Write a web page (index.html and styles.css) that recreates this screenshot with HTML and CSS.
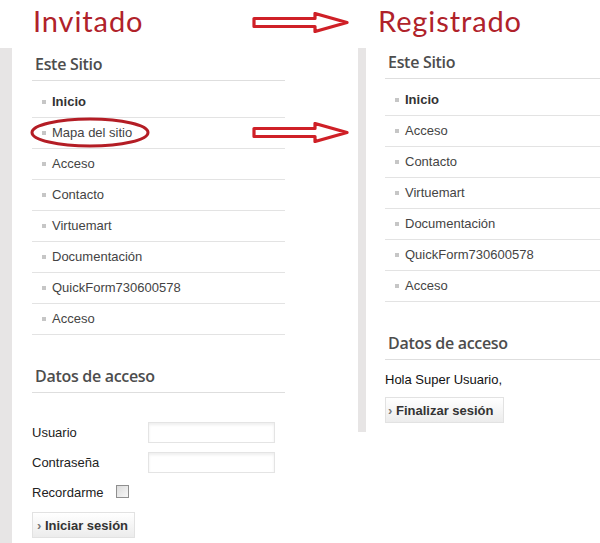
FILE: index.html
```html
<!DOCTYPE html>
<html lang="es">
<head>
    <meta charset="UTF-8">
    <title>Invitado / Registrado</title>
    <link rel="stylesheet" href="styles.css">
</head>
<body>
    <div class="page">
        <section class="col guest">
            <h1 class="title">Invitado</h1>
            <div class="panel">
                <div class="module">
                    <h3>Este Sitio</h3>
                    <ul class="menu">
                        <li class="current">Inicio</li>
                        <li>Mapa del sitio</li>
                        <li>Acceso</li>
                        <li>Contacto</li>
                        <li>Virtuemart</li>
                        <li>Documentación</li>
                        <li>QuickForm730600578</li>
                        <li>Acceso</li>
                    </ul>
                </div>
                <div class="module">
                    <h3>Datos de acceso</h3>
                    <form class="login">
                        <div class="row">
                            <label>Usuario</label>
                            <input type="text">
                        </div>
                        <div class="row">
                            <label>Contraseña</label>
                            <input type="password">
                        </div>
                        <div class="row check">
                            <label>Recordarme</label>
                            <input type="checkbox">
                        </div>
                        <button type="button" class="btn"><span>›</span> Iniciar sesión</button>
                    </form>
                </div>
            </div>
        </section>

        <section class="col user">
            <h1 class="title">Registrado</h1>
            <div class="panel">
                <div class="module">
                    <h3>Este Sitio</h3>
                    <ul class="menu">
                        <li class="current">Inicio</li>
                        <li>Acceso</li>
                        <li>Contacto</li>
                        <li>Virtuemart</li>
                        <li>Documentación</li>
                        <li>QuickForm730600578</li>
                        <li>Acceso</li>
                    </ul>
                </div>
                <div class="module">
                    <h3>Datos de acceso</h3>
                    <p class="hello">Hola Super Usuario,</p>
                    <button type="button" class="btn"><span>›</span> Finalizar sesión</button>
                </div>
            </div>
        </section>

        <!-- red annotations drawn over the screenshot -->
        <svg class="arrow arrow-top" viewBox="0 0 98 21">
            <path d="M2,6.5 H63 V1.5 L95,10.5 L63,19.5 V14.5 H2 Z"/>
        </svg>
        <svg class="arrow arrow-mid" viewBox="0 0 98 21">
            <path d="M2,6.5 H63 V1.5 L95,10.5 L63,19.5 V14.5 H2 Z"/>
        </svg>
        <svg class="circle" viewBox="0 0 120 31">
            <ellipse cx="60" cy="15.5" rx="58" ry="13.5"/>
        </svg>
    </div>
</body>
</html>
```

FILE: styles.css
```css
* {
    margin: 0;
    padding: 0;
    box-sizing: border-box;
}

body {
    width: 600px;
    height: 543px;
    overflow: hidden;
    background-color: #ffffff;
    font-family: "Liberation Sans", Arial, sans-serif;
    font-size: 13px;
    color: #333333;
}

.page {
    position: relative;
    display: flex;
    height: 100%;
}

.col {
    display: flex;
    flex-direction: column;
}

.guest {
    width: 358px;
}

.user {
    flex: 1;
}

.title {
    height: 48px;
    padding-top: 3px;
    font-family: Lato, "Open Sans", sans-serif;
    font-size: 29px;
    font-weight: 400;
    line-height: 36px;
    letter-spacing: 0.9px;
    color: #b0222a;
}

.guest .title {
    padding-left: 33px;
}

.user .title {
    padding-left: 20px;
}

.panel {
    flex: 1;
    border-left: 12px solid #e7e5e5;
    padding-left: 20px;
}

.guest .panel {
    width: 285px;
}

.user .panel {
    flex: 0 0 auto;
    height: 384px;
    border-left-width: 8px;
    padding-left: 19px;
}

.module h3 {
    padding: 5px 3px;
    font-family: "Open Sans", sans-serif;
    font-size: 16px;
    font-weight: 600;
    line-height: 22px;
    letter-spacing: -0.3px;
    color: #4d4d4d;
    border-bottom: 1px solid #dedede;
}

.user .module:first-child h3 {
    padding-top: 3px;
}

.module + .module {
    margin-top: 25px;
}

.menu {
    list-style: none;
    padding-top: 6px;
}

.menu li {
    display: flex;
    align-items: center;
    gap: 6px;
    height: 31px;
    padding-left: 10px;
    padding-bottom: 1px;
    border-bottom: 1px solid #e3e3e3;
    color: #444444;
}

.menu li::before {
    content: "";
    width: 4px;
    height: 4px;
    background-color: #c6c6c6;
}

.menu li.current {
    font-weight: bold;
    color: #333333;
}

.login {
    display: flex;
    flex-direction: column;
    align-items: flex-start;
    gap: 9px;
    padding-top: 29px;
}

.row {
    display: flex;
    align-items: center;
    height: 21px;
}

.row label {
    width: 116px;
    color: #222222;
}

.row input[type="text"],
.row input[type="password"] {
    width: 127px;
    height: 21px;
    border: 1px solid #e4e4e4;
    box-shadow: inset 0 2px 3px #efefef;
    outline: none;
}

.row.check {
    gap: 12px;
}

.row.check label {
    width: auto;
}

.row input[type="checkbox"] {
    appearance: none;
    width: 13px;
    height: 13px;
    margin-top: -3px;
    border: 1px solid #8f8f8f;
    background: linear-gradient(135deg, #dcdcdc, #f7f7f7);
}

.btn {
    height: 26px;
    padding: 0 6px 0 4px;
    border: 1px solid #e2e2e2;
    background: linear-gradient(#ffffff, #ececec);
    font-family: "Liberation Sans", Arial, sans-serif;
    font-size: 13px;
    font-weight: bold;
    color: #333333;
}

.btn span {
    color: #777777;
}

.hello {
    margin-top: 11px;
    line-height: 18px;
    color: #111111;
}

.user .btn {
    margin-top: 8px;
    padding-left: 2px;
    padding-right: 9px;
}

.arrow {
    position: absolute;
    left: 252px;
    width: 98px;
    height: 21px;
}

.arrow path {
    fill: #ffffff;
    stroke: #cf2027;
    stroke-width: 3.2;
    stroke-linejoin: round;
}

.arrow-top {
    top: 12px;
}

.arrow-mid {
    top: 122px;
}

.circle {
    position: absolute;
    left: 30px;
    top: 117px;
    width: 120px;
    height: 31px;
}

.circle ellipse {
    fill: none;
    stroke: #b41d25;
    stroke-width: 3;
}
```
